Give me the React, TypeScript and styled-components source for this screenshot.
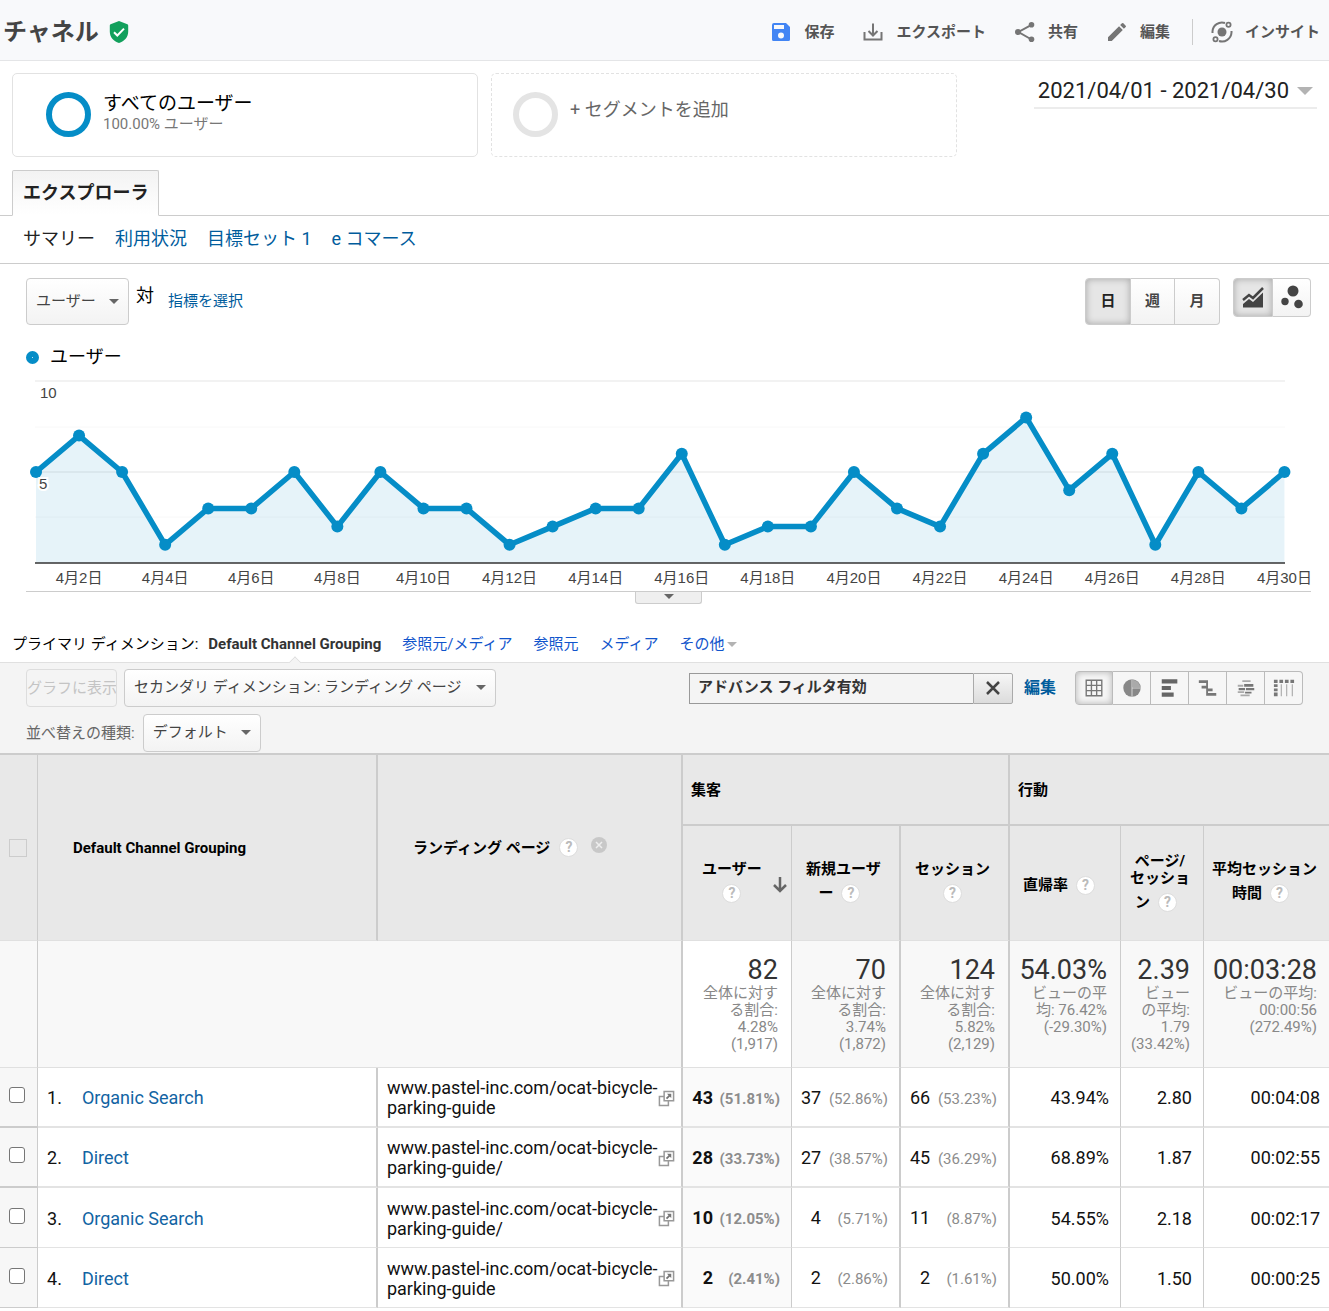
import React from "react";
import styled, { createGlobalStyle, css } from "styled-components";

const BLUE = "#058dc7";
const LINK = "#005c9c";
const LINE = "#cccccc";

const GlobalStyle = createGlobalStyle`
  *, *::before, *::after { box-sizing: border-box; }
  body {
    margin: 0;
    background: #fff;
    color: #000;
    font-family: Roboto, "Noto Sans CJK JP", sans-serif;
    font-size: 15px;
    line-height: 20px;
  }
  button, input, select { font: inherit; color: inherit; margin: 0; }
  button { cursor: pointer; }
  a { color: ${LINK}; text-decoration: none; }
`;

/* ---------- top bar ---------- */
const TopBar = styled.header`
  display: flex;
  align-items: center;
  justify-content: space-between;
  height: 61px;
  padding: 4px 9px 0 3px;
  background: #f8f9fb;
  border-bottom: 1px solid #e4e5e7;
`;
const Title = styled.h1`
  display: flex;
  align-items: center;
  gap: 10px;
  margin: 0;
  font-size: 24px;
  line-height: 30px;
  font-weight: 700;
  color: #444;
`;
const Actions = styled.nav`
  display: flex;
  align-items: center;
  gap: 27px;
`;
const Action = styled.button`
  display: flex;
  align-items: center;
  gap: 11px;
  padding: 0;
  border: 0;
  background: none;
  font-weight: 700;
  color: #555;
  white-space: nowrap;
`;
const InsightGroup = styled.div`
  display: flex;
  padding-left: 17px;
  margin-left: -5px;
  border-left: 1px solid ${LINE};
  height: 26px;
`;

/* ---------- segments ---------- */
const Segments = styled.section`
  display: grid;
  grid-template-columns: 466fr 466fr 347fr;
  gap: 13px;
  padding: 12px 12px 13px;
`;
const Segment = styled.button<{ $dashed?: boolean }>`
  display: flex;
  align-items: center;
  gap: 12px;
  height: 84px;
  padding: 0 0 2px ${(p) => (p.$dashed ? 21 : 33)}px;
  border: 1px ${(p) => (p.$dashed ? "dashed" : "solid")} #e2e2e2;
  border-radius: 5px;
  background: #fff;
  text-align: left;
`;
const Ring = styled.span<{ $color: string }>`
  flex: none;
  width: 45px;
  height: 45px;
  border: 6px solid ${(p) => p.$color};
  border-radius: 50%;
`;
const SegmentText = styled.span`
  display: flex;
  flex-direction: column;
  font-size: 19px;
  small {
    font-size: 15px;
    color: #777;
  }
`;
const AddText = styled.span`
  font-size: 18px;
  color: #666;
  padding-bottom: 8px;
`;
const DateRange = styled.button`
  justify-self: end;
  align-self: start;
  display: flex;
  align-items: center;
  gap: 8px;
  height: 36px;
  padding: 2px 4px 0;
  border: 0;
  border-bottom: 2px solid #ececec;
  background: none;
  font-size: 22px;
  color: #222;
  white-space: nowrap;
`;
const Caret = styled.span<{ $w?: number; $color?: string }>`
  border: solid transparent;
  border-width: ${(p) => p.$w ?? 5}px ${(p) => p.$w ?? 5}px 0;
  border-top-color: ${(p) => p.$color ?? "#666"};
`;

/* ---------- tabs ---------- */
const TabBar = styled.div`
  display: flex;
  padding-left: 12px;
  height: 46px;
  border-bottom: 1px solid ${LINE};
`;
const Tab = styled.button`
  height: 46px;
  padding: 0 10px;
  border: 1px solid ${LINE};
  border-bottom-color: #fff;
  border-radius: 2px 2px 0 0;
  background: linear-gradient(#f3f3f3, #fff);
  font-size: 18px;
  font-weight: 700;
  color: #222;
`;
const SubNav = styled.nav`
  display: flex;
  align-items: center;
  gap: 20px;
  height: 48px;
  padding: 0 23px 1px;
  border-bottom: 1px solid ${LINE};
  font-size: 18px;
  a[aria-current] { color: #222; }
`;

/* ---------- controls ---------- */
const Controls = styled.div`
  display: flex;
  align-items: flex-start;
  padding: 14px 18px 0 26px;
`;
const SelectBox = styled.label<{ $h: number; $pad?: number }>`
  position: relative;
  display: inline-flex;
  height: ${(p) => p.$h}px;
  select {
    appearance: none;
    height: 100%;
    padding: 0 31px 2px 9px;
    border: 1px solid ${LINE};
    border-radius: 4px;
    background: linear-gradient(#fff, #f3f3f3);
    color: #444;
  }
  > ${Caret} {
    position: absolute;
    right: 10px;
    top: calc(50% - 3px);
    pointer-events: none;
  }
`;
const Versus = styled.span`
  margin: 8px 14px 0 7px;
  font-size: 18px;
`;
const MetricLink = styled.a`
  margin-top: 13px;
`;
const Periods = styled.div`
  display: flex;
  margin-left: auto;
`;
const pressed = css`
  background: #e6e6e6;
  box-shadow: inset 0 0 7px rgba(0, 0, 0, 0.28);
  color: #222;
`;
const Seg = styled.button<{ $on?: boolean; $w: number; $h: number }>`
  display: flex;
  align-items: center;
  justify-content: center;
  width: ${(p) => p.$w}px;
  height: ${(p) => p.$h}px;
  padding: 0 0 1px;
  border: 1px solid ${LINE};
  border-left-width: 0;
  background: linear-gradient(#fff, #f3f3f3);
  font-weight: 700;
  color: #444;
  &:first-child { border-left-width: 1px; border-radius: 4px 0 0 4px; }
  &:last-child { border-radius: 0 4px 4px 0; }
  ${(p) => p.$on && pressed}
`;
const ChartTypes = styled.div`
  display: flex;
  margin-left: 13px;
`;

/* ---------- chart ---------- */
const Legend = styled.div`
  display: flex;
  align-items: center;
  gap: 11px;
  padding: 22px 26px 0;
  font-size: 18px;
`;
const LegendDot = styled.span`
  width: 13px;
  height: 13px;
  border: 6px solid ${BLUE};
  border-radius: 50%;
  background: #fff;
`;
const ChartArea = styled.div`
  margin: 0 18px 0 26px;
`;
const Figure = styled.figure`
  margin: 0;
  padding-top: 3px;
  border-bottom: 1px solid ${LINE};
`;
const ChartSvg = styled.svg`
  display: block;
  width: 100%;
  overflow: visible;
  font-family: "Liberation Sans", "Noto Sans CJK JP", sans-serif;
  font-size: 15px;
  text { fill: #444; }
`;
const Handle = styled.button`
  display: flex;
  align-items: center;
  justify-content: center;
  width: 67px;
  height: 12px;
  margin: 0 auto;
  padding: 0 0 3px;
  border: 1px solid ${LINE};
  border-top: 0;
  border-radius: 0 0 3px 3px;
  background: #efefef;
`;

/* ---------- dimensions and toolbar ---------- */
const Dimensions = styled.nav`
  display: flex;
  align-items: center;
  gap: 21px;
  height: 59px;
  padding: 22px 12px 0;
  border-bottom: 1px solid #e0e0e0;
  a { color: #15c; }
`;
const DimensionLabel = styled.span`
  margin-right: -11px;
`;
const CurrentDimension = styled.b`
  position: relative;
  font-weight: 700;
  color: #333;
  &::after {
    content: "";
    position: absolute;
    left: calc(50% - 5px);
    top: 24px;
    width: 10px;
    height: 10px;
    transform: rotate(45deg);
    border: 1px solid #ddd;
    border-right-color: transparent;
    border-bottom-color: transparent;
    background: #f4f4f4;
    clip-path: polygon(0 0, 100% 0, 0 100%);
  }
`;
const MoreLink = styled.a`
  display: flex;
  align-items: center;
  gap: 3px;
`;
const Toolbar = styled.section`
  display: flex;
  flex-direction: column;
  gap: 7px;
  padding: 6px 26px 1px;
  background: #f4f4f4;
`;
const ToolRow = styled.div`
  display: flex;
  align-items: center;
`;
const PlotButton = styled.button`
  width: 91px;
  height: 38px;
  margin-right: 7px;
  padding: 0;
  overflow: hidden;
  border: 1px solid #ddd;
  border-radius: 4px;
  background: #f4f4f4;
  white-space: nowrap;
  &:disabled { color: #c4c4c4; }
`;
const Filter = styled.div`
  display: flex;
  width: 324px;
  height: 31px;
  margin: 0 11px 0 auto;
  input {
    flex: 1;
    min-width: 0;
    padding: 0 8px 2px;
    border: 1px solid #999;
    border-right: 0;
    background: #f4f4f4;
    font-weight: 700;
    color: #333;
  }
  button {
    display: grid;
    place-items: center;
    width: 40px;
    padding: 0;
    border: 1px solid #aaa;
    border-radius: 0 2px 2px 0;
    background: linear-gradient(#f6f6f6, #dcdcdc);
  }
`;
const EditLink = styled.a`
  margin-right: 19px;
  font-size: 16px;
  font-weight: 700;
`;
const Views = styled.div`
  display: flex;
  button { background: #f6f6f6; border-color: #bbb; }
`;
const SortLabel = styled.span`
  color: #666;
  margin-right: 8px;
`;

/* ---------- table ---------- */
const Table = styled.table`
  width: 100%;
  table-layout: fixed;
  border-collapse: separate;
  border-spacing: 0;
  border-top: 2px solid ${LINE};
`;
const Col = styled.col<{ $w?: number }>`
  width: ${(p) => (p.$w ? `${p.$w}px` : "auto")};
`;
const Th = styled.th<{ $r?: number; $pad?: number; $h?: number; $b?: boolean }>`
  height: ${(p) => (p.$h ? `${p.$h}px` : "auto")};
  padding: 0 0 0 ${(p) => p.$pad ?? 8}px;
  border-right: ${(p) => p.$r ?? 0}px solid ${LINE};
  border-bottom: ${(p) => (p.$b ? `2px solid ${LINE}` : "1px solid #e0e0e0")};
  background: #e8e8e8;
  text-align: left;
  font-weight: 700;
`;
const HeadInner = styled.div<{ $sorted?: boolean }>`
  display: flex;
  align-items: center;
  padding: 4px ${(p) => (p.$sorted ? 4 : 12)}px 0 0;
`;
const HeadLines = styled.span`
  flex: 1;
  text-align: center;
  line-height: 17px;
  white-space: nowrap;
  > span { display: block; }
`;
const HelpLine = styled.span<{ $text: boolean }>`
  && {
    display: flex;
    align-items: center;
    justify-content: center;
    gap: 8px;
    height: 31px;
    padding-right: ${(p) => (p.$text ? 8 : 0)}px;
  }
`;
const Help = styled.button`
  width: 19px;
  height: 19px;
  padding: 0;
  border: 1px solid #ddd;
  border-radius: 50%;
  background: #fff;
  font-size: 14px;
  line-height: 17px;
  font-weight: 700;
  color: #bbb;
`;
const Remove = styled.button`
  display: grid;
  place-items: center;
  width: 16px;
  height: 16px;
  padding: 0;
  border: 0;
  border-radius: 50%;
  background: #c8c8c8;
`;
const LandingHead = styled.div`
  display: flex;
  align-items: center;
  gap: 9px;
  ${Remove} { margin: 0 0 5px 4px; }
`;
const Check = styled.input<{ $head?: boolean }>`
  appearance: none;
  display: block;
  width: ${(p) => (p.$head ? 18 : 16)}px;
  height: ${(p) => (p.$head ? 18 : 16)}px;
  margin: 0;
  border: 1px solid ${(p) => (p.$head ? "#ccc" : "#767676")};
  border-radius: ${(p) => (p.$head ? 0 : 3)}px;
  background: ${(p) => (p.$head ? "transparent" : "#fff")};
  &:checked { background: ${BLUE}; }
`;
const SummaryCell = styled.td<{ $r?: number; $on?: boolean }>`
  height: 127px;
  padding: 14px 13px 0 0;
  vertical-align: top;
  text-align: right;
  border-right: ${(p) => p.$r ?? 0}px solid ${LINE};
  border-bottom: 1px solid #e0e0e0;
  background: ${(p) => (p.$on ? "#fff" : "#f8f8f8")};
  white-space: nowrap;
  &:last-child { padding-right: 12px; }
  strong {
    display: block;
    font-size: 27px;
    line-height: 30px;
    font-weight: 400;
    color: #333;
  }
  span {
    display: block;
    line-height: 17px;
    color: #888;
  }
`;
const BodyRow = styled.tr`
  td { border-bottom-width: 2px; }
  &:nth-child(n + 4) td { border-bottom-width: 1px; }
`;
const Cell = styled.td<{ $r?: number; $on?: boolean; $num?: boolean; $check?: boolean }>`
  height: 60px;
  padding: ${(p) => (p.$check ? 0 : 2)}px ${(p) => (p.$num ? 11 : 0)}px 0 9px;
  border-right: ${(p) => p.$r ?? 0}px solid ${LINE};
  border-bottom: 1px solid ${(p) => (p.$check ? "#ccc" : "#e3e3e3")};
  background: ${(p) => (p.$check ? "#f7f7f7" : p.$on ? "#fafafa" : "#fff")};
  font-size: 18px;
  font-weight: ${(p) => (p.$on ? 700 : 400)};
  text-align: ${(p) => (p.$num ? "right" : "left")};
  color: #111;
  white-space: nowrap;
  ${(p) => p.$num && css`&:last-child { padding-right: 9px; }`}
  ${(p) => p.$check && css`padding-bottom: 4px;`}
  a { color: #1264a3; }
`;
const Channel = styled.div`
  display: flex;
  gap: 20px;
`;
const Landing = styled.div`
  display: flex;
  align-items: center;
  justify-content: space-between;
  padding-right: 6px;
  white-space: normal;
  svg { flex: none; }
`;
const Count = styled.span`
  display: flex;
  justify-content: flex-end;
  align-items: baseline;
  small {
    width: 67px;
    font-size: 15px;
    color: #8c8c8c;
  }
`;

/* ---------- data ---------- */
const users = [5, 7, 5, 1, 3, 3, 5, 2, 5, 3, 3, 1, 2, 3, 3, 6, 1, 2, 2, 5, 3, 2, 6, 8, 4, 6, 1, 5, 3, 5];

const metrics = [
  { r: 1, head: ["ユーザー", ""], total: "82", note: ["全体に対す", "る割合:", "4.28%", "(1,917)"] },
  { r: 2, head: ["新規ユーザ", "ー"], total: "70", note: ["全体に対す", "る割合:", "3.74%", "(1,872)"] },
  { r: 2, head: ["セッション", ""], total: "124", note: ["全体に対す", "る割合:", "5.82%", "(2,129)"] },
  { r: 1, head: ["直帰率"], total: "54.03%", note: ["ビューの平", "均: 76.42%", "(-29.30%)"] },
  { r: 1, head: ["ページ/", "セッショ", "ン"], total: "2.39", note: ["ビュー", "の平均:", "1.79", "(33.42%)"] },
  { r: 0, head: ["平均セッション", "時間"], total: "00:03:28", note: ["ビューの平均:", "00:00:56", "(272.49%)"] },
];

const rows = [
  { name: "Organic Search", url: "www.pastel-inc.com/ocat-bicycle-parking-guide", values: [["43", "(51.81%)"], ["37", "(52.86%)"], ["66", "(53.23%)"], ["43.94%"], ["2.80"], ["00:04:08"]] },
  { name: "Direct", url: "www.pastel-inc.com/ocat-bicycle-parking-guide/", values: [["28", "(33.73%)"], ["27", "(38.57%)"], ["45", "(36.29%)"], ["68.89%"], ["1.87"], ["00:02:55"]] },
  { name: "Organic Search", url: "www.pastel-inc.com/ocat-bicycle-parking-guide/", values: [["10", "(12.05%)"], ["4", "(5.71%)"], ["11", "(8.87%)"], ["54.55%"], ["2.18"], ["00:02:17"]] },
  { name: "Direct", url: "www.pastel-inc.com/ocat-bicycle-parking-guide", values: [["2", "(2.41%)"], ["2", "(2.86%)"], ["2", "(1.61%)"], ["50.00%"], ["1.50"], ["00:00:25"]] },
];

/* ---------- icons ---------- */
const Icon = ({ children, size = 24 }: { children: React.ReactNode; size?: number }) => (
  <svg width={size} height={size} viewBox="0 0 24 24" fill="#757575" aria-hidden="true">
    {children}
  </svg>
);
const ShieldIcon = () => (
  <svg width="20" height="22" viewBox="0 0 20 22" aria-hidden="true">
    <path d="M10 0 L18.4 3.2 Q19.2 3.5 19.2 4.4 V10.5 C19.2 16 15.5 20.4 10 22 C4.500 20.400.8 16 .8 10.500 V4.400 Q.8 3.500 1.600 3.200 Z" fill="#12a05c" />
    <path d="M5 11.200 8.300 14.500 15 7.600" fill="none" stroke="#fff" strokeWidth="2" />
  </svg>
);
const SaveIcon = () => (
  <Icon>
    <path fill="#4285f4" fillRule="evenodd" d="M5 3h12l4 4v12.500a1.500 1.500 0 0 1-1.500 1.500h-15A1.500 1.500 0 0 1 3 19.500V5a2 2 0 0 1 2-2zM5 5v4h10V5zM12 12.500a3 3 0 1 0 0 6 3 3 0 0 0 0-6z" />
  </Icon>
);
const ExportIcon = () => (
  <Icon>
    <path d="M3.500 12v7.500h17V12M12 3.500V15M7.500 11l4.500 4.500 4.500-4.500" fill="none" stroke="#757575" strokeWidth="2" />
  </Icon>
);
const ShareIcon = () => (
  <Icon>
    <path d="M18.500 4.800 5.500 12l13 7.500" fill="none" stroke="#757575" strokeWidth="2" />
    <circle cx="18.500" cy="4.800" r="2.800" />
    <circle cx="5" cy="12" r="3" />
    <circle cx="18.500" cy="19.200" r="2.800" />
  </Icon>
);
const EditIcon = () => (
  <Icon>
    <path d="M3 17.250V21h3.750L17.810 9.940l-3.750-3.750L3 17.250zM20.710 7.040a1 1 0 0 0 0-1.410l-2.340-2.340a1 1 0 0 0-1.410 0l-1.830 1.830 3.750 3.750 1.830-1.830z" />
  </Icon>
);
const InsightIcon = () => (
  <Icon>
    <circle cx="12" cy="12" r="4.500" />
    <g fill="none" stroke="#757575" strokeWidth="2">
      <path d="M15 3A9.500 9.500 0 0 0 2.500 11.500V13M9 21A9.500 9.500 0 0 0 21.500 12.500V11" />
      <circle cx="18.500" cy="4.800" r="2.100" strokeWidth="1.800" />
      <circle cx="5.500" cy="19.200" r="2.100" strokeWidth="1.800" />
    </g>
  </Icon>
);
const PopOutIcon = () => (
  <svg width="17" height="17" viewBox="0 0 18 18" fill="none" stroke="#999" strokeWidth="1.600" aria-hidden="true">
    <path d="M6.500 1.500h10v10h-10zM6 7H1.500v9.500H11V12" />
    <path d="M9 9.200l3.500-3.500" stroke="#777" strokeWidth="2" />
    <path d="M9.500 4h4.500v4.500z" fill="#777" stroke="none" />
  </svg>
);
const viewIcons: [string, React.ReactNode][] = [
  ["表", <g fill="none" stroke="#777" strokeWidth="1.500"><path d="M3.500 3.500h17v17h-17zM9.200 3.500v17M14.900 3.500v17M3.500 9.200h17M3.500 14.900h17" /></g>],
  ["割合", <><circle cx="12" cy="12" r="9.500" fill="#888" /><path d="M12 2.500V12h9.500M12 12v9.500" stroke="#ddd" fill="none" /><path d="M12.500 3A9 9 0 0 1 21 11.500h-8.500z" fill="#aaa" /></>],
  ["パフォーマンス", <path d="M3 2.500h17v4.500H3zM3 9.800h10v4.500H3zM3 17h13v4.500H3z" fill="#666" />],
  ["比較", <path d="M2 3.500h10v3H2zM10 3.500h2v17h-2zM5 9.500h6v3H5zM12 12.500h5v3h-5zM12 17.500h9v3h-9z" fill="#777" />],
  ["用語クラウド", <g><path d="M8 3.500h9v2H8zM3 8.500h6v2H3zM6 19h10v2H6zM3 15.500h7v2H3z" fill="#aaa" /><path d="M10 7.500h10v3H10zM4 12h7v2.500H4zM12 12h9v2.500h-9zM11 16h7v2h-7z" fill="#777" /></g>],
  ["ピボット", <g fill="#777"><path d="M1 3h4v3.500H1zM7 3h4v3.500H7zM13 3h4v3.500h-4zM19 3h4v3.500h-4zM1 8h4v3H1zM1 12.500h4v3H1zM1 17h4v4H1z" /><path d="M8.500 8h1v13h-1zM14.500 8h1v13h-1zM20.500 8h1v13h-1z" fill="#999" /></g>],
];

/* ---------- parts ---------- */
function UserChart() {
  const x = (i: number) => 10 + i * 43.05;
  const y = (v: number) => 193 - v * 18.2;
  const line = users.map((v, i) => `${x(i)},${y(v)}`).join(" ");
  return (
    <ChartSvg viewBox="0 0 1285 221" role="img" aria-label="ユーザー数の推移">
      <path d="M9 11h1250M9 102h1250" stroke="#f2f2f2" strokeWidth="2" />
      <path d="M9 57h1250M9 147h1250" stroke="#f8f8f8" strokeWidth="1" />
      <polygon points={`${x(0)},193 ${line} ${x(29)},193`} fill={BLUE} fillOpacity="0.1" />
      <path d="M9 193h1250" stroke="#333" strokeWidth="1.500" />
      <polyline points={line} fill="none" stroke={BLUE} strokeWidth="5.500" strokeLinejoin="round" />
      {users.map((v, i) => <circle key={i} cx={x(i)} cy={y(v)} r="6" fill={BLUE} />)}
      <text x="14" y="28">10</text>
      <text x="13" y="119" stroke="#fff" strokeWidth="4" paintOrder="stroke">5</text>
      {users.map((_, i) => i % 2 === 1 && (
        <text key={i} x={x(i)} y="213" textAnchor="middle">{`4月${i + 1}日`}</text>
      ))}
    </ChartSvg>
  );
}

function Dropdown({ label, value, h }: { label: string; value: string; h: number }) {
  return (
    <SelectBox $h={h}>
      <select aria-label={label} defaultValue={value}>
        <option>{value}</option>
      </select>
      <Caret />
    </SelectBox>
  );
}

function ReportTable() {
  return (
    <Table>
      <colgroup>
        <Col $w={38} /><Col /><Col $w={305} />
        {[109, 109, 109, 111, 83, 125].map((w, i) => <Col key={i} $w={w} />)}
      </colgroup>
      <thead>
        <tr>
          <Th rowSpan={2} $r={1} $pad={9}><Check $head type="checkbox" disabled aria-label="すべて選択" /></Th>
          <Th rowSpan={2} $r={2} $pad={35}>Default Channel Grouping</Th>
          <Th rowSpan={2} $r={2} $pad={35}>
            <LandingHead>
              ランディング ページ
              <Help aria-label="ヘルプ">?</Help>
              <Remove aria-label="削除">
                <svg width="8" height="8" viewBox="0 0 8 8" stroke="#eee" strokeWidth="1.500" aria-hidden="true"><path d="M1 1l6 6M7 1L1 7" /></svg>
              </Remove>
            </LandingHead>
          </Th>
          <Th colSpan={3} $h={71} $r={2} $b>集客</Th>
          <Th colSpan={3} $h={71} $b>行動</Th>
        </tr>
        <tr>
          {metrics.map((m, i) => {
            const last = m.head[m.head.length - 1];
            return (
              <Th key={i} $h={115} $r={m.r}>
                <HeadInner $sorted={i === 0}>
                  <HeadLines>
                    {m.head.slice(0, -1).map((t) => <span key={t}>{t}</span>)}
                    <HelpLine $text={last !== ""}>{last}<Help aria-label="ヘルプ">?</Help></HelpLine>
                  </HeadLines>
                  {i === 0 && (
                    <svg width="14" height="16" viewBox="0 0 14 16" fill="none" stroke="#666" strokeWidth="2.500" aria-label="降順"><path d="M7 0v14M1 8l6 6 6-6" /></svg>
                  )}
                </HeadInner>
              </Th>
            );
          })}
        </tr>
      </thead>
      <tbody>
        <tr>
          <SummaryCell $r={1} />
          <SummaryCell $r={2} colSpan={2} />
          {metrics.map((m, i) => (
            <SummaryCell key={i} $r={m.r} $on={i === 0}>
              <strong>{m.total}</strong>
              {m.note.map((n) => <span key={n}>{n}</span>)}
            </SummaryCell>
          ))}
        </tr>
        {rows.map((row, n) => (
          <BodyRow key={n}>
            <Cell $r={1} $check><Check type="checkbox" aria-label={`${n + 1} 行目を選択`} /></Cell>
            <Cell $r={2}><Channel><span>{n + 1}.</span><a href="#channel">{row.name}</a></Channel></Cell>
            <Cell $r={2}><Landing><span>{row.url}</span><PopOutIcon /></Landing></Cell>
            {row.values.map(([value, share], i) => (
              <Cell key={i} $num $r={metrics[i].r} $on={i === 0}>
                {share ? <Count>{value}<small>{share}</small></Count> : value}
              </Cell>
            ))}
          </BodyRow>
        ))}
      </tbody>
    </Table>
  );
}

export default function App() {
  return (
    <>
      <GlobalStyle />
      <TopBar>
        <Title>チャネル<ShieldIcon /></Title>
        <Actions>
          <Action><SaveIcon />保存</Action>
          <Action><ExportIcon />エクスポート</Action>
          <Action><ShareIcon />共有</Action>
          <Action><EditIcon />編集</Action>
          <InsightGroup><Action><InsightIcon />インサイト</Action></InsightGroup>
        </Actions>
      </TopBar>
      <Segments>
        <Segment>
          <Ring $color={BLUE} />
          <SegmentText>すべてのユーザー<small>100.00% ユーザー</small></SegmentText>
        </Segment>
        <Segment $dashed>
          <Ring $color="#e4e4e4" />
          <AddText>+ セグメントを追加</AddText>
        </Segment>
        <DateRange>2021/04/01 - 2021/04/30<Caret $w={8} $color="#b3b3b3" /></DateRange>
      </Segments>
      <TabBar><Tab>エクスプローラ</Tab></TabBar>
      <SubNav>
        <a href="#summary" aria-current="page">サマリー</a>
        <a href="#usage">利用状況</a>
        <a href="#goals">目標セット 1</a>
        <a href="#ecommerce">e コマース</a>
      </SubNav>
      <Controls>
        <Dropdown label="指標" value="ユーザー" h={47} />
        <Versus>対</Versus>
        <MetricLink href="#metric">指標を選択</MetricLink>
        <Periods>
          <Seg $on $w={46} $h={47}>日</Seg>
          <Seg $w={44} $h={47}>週</Seg>
          <Seg $w={45} $h={47}>月</Seg>
        </Periods>
        <ChartTypes>
          <Seg $on $w={40} $h={39} aria-label="折れ線グラフ">
            <svg width="22" height="22" viewBox="0 0 22 22" fill="#444" aria-hidden="true">
              <path d="M1 21.500V18l6-5 4 3L21 6.500v15z" />
              <path d="M1 14l6-5 4 3 10-10" fill="none" stroke="#444" strokeWidth="2.500" />
            </svg>
          </Seg>
          <Seg $w={38} $h={39} aria-label="モーション グラフ">
            <svg width="22" height="24" viewBox="0 0 22 24" fill="#444" aria-hidden="true">
              <circle cx="12" cy="6" r="5.500" /><circle cx="4" cy="16.500" r="3.700" /><circle cx="17.500" cy="19" r="4.300" />
            </svg>
          </Seg>
        </ChartTypes>
      </Controls>
      <Legend><LegendDot />ユーザー</Legend>
      <ChartArea>
        <Figure><UserChart /></Figure>
        <Handle aria-label="グラフを開閉"><Caret /></Handle>
      </ChartArea>
      <Dimensions>
        <DimensionLabel>プライマリ ディメンション:</DimensionLabel>
        <CurrentDimension>Default Channel Grouping</CurrentDimension>
        <a href="#source-medium">参照元/メディア</a>
        <a href="#source">参照元</a>
        <a href="#medium">メディア</a>
        <MoreLink href="#more">その他<Caret $color="#b3b3b3" /></MoreLink>
      </Dimensions>
      <Toolbar>
        <ToolRow>
          <PlotButton disabled>グラフに表示</PlotButton>
          <Dropdown label="セカンダリ ディメンション" value="セカンダリ ディメンション: ランディング ページ" h={38} />
          <Filter>
            <input aria-label="フィルタ" defaultValue="アドバンス フィルタ有効" />
            <button aria-label="フィルタをクリア">
              <svg width="14" height="14" viewBox="0 0 14 14" stroke="#444" strokeWidth="2.500" aria-hidden="true"><path d="M1 1l12 12M13 1L1 13" /></svg>
            </button>
          </Filter>
          <EditLink href="#edit">編集</EditLink>
          <Views>
            {viewIcons.map(([name, art], i) => (
              <Seg key={name} $on={i === 0} $w={38} $h={34} aria-label={name}><Icon size={22}>{art}</Icon></Seg>
            ))}
          </Views>
        </ToolRow>
        <ToolRow>
          <SortLabel>並べ替えの種類:</SortLabel>
          <Dropdown label="並べ替えの種類" value="デフォルト" h={38} />
        </ToolRow>
      </Toolbar>
      <ReportTable />
    </>
  );
}
